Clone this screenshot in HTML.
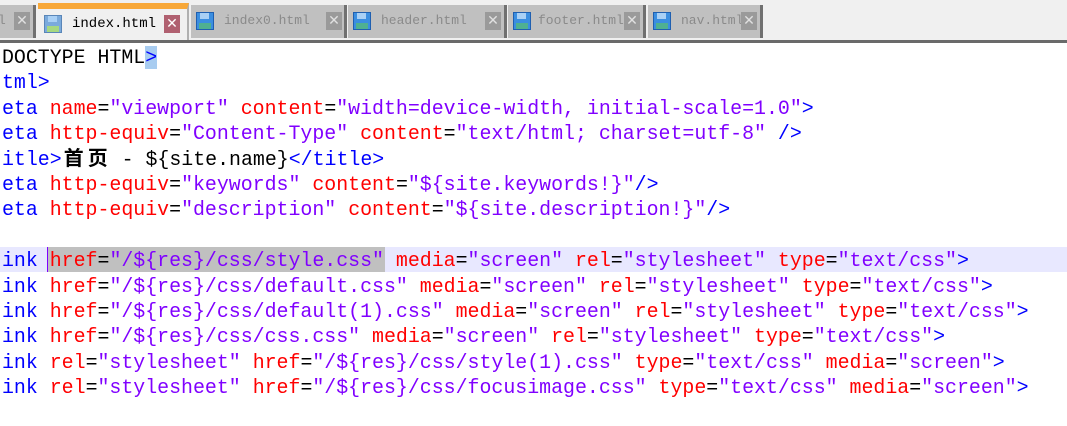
<!DOCTYPE html>
<html><head><meta charset="utf-8"><style>
body{margin:0;width:1067px;height:426px;overflow:hidden;background:#fff;position:relative;font-family:"Liberation Mono","Courier New",monospace}
#bar{position:absolute;left:0;top:0;width:1067px;height:40px;background:#f0f0f0}
#bar .line{position:absolute;left:0;top:40px;width:1067px;height:3px;background:#6a6a6a}
.tab{position:absolute;top:5px;height:33px;background:#c0c0c0;border-right:3px solid #707070;box-sizing:border-box}
.tab.act{top:3px;height:38px;background:#f0f0f0;border-top:6px solid #f8a838;border-right:2px solid #b0b0b0}
.tab .t{position:absolute;top:8px;font-family:"Liberation Mono","Courier New",monospace;font-size:13px;color:#8a8a8a;white-space:nowrap}
.tab.act .t{top:7px;color:#000;font-size:14px}
.ic{position:absolute;top:7px;width:18px;height:18px;background:#3b8ee0;border:1px solid #1f5fb0;box-sizing:border-box}
.ic:before{content:"";position:absolute;left:3px;top:0;width:9px;height:6px;background:#a9d0f5}
.ic:after{content:"";position:absolute;left:2px;top:10px;width:12px;height:6px;background:#4fb090}
.act .ic{top:6px;background:#7aaadc;border-color:#5a86b8}
.act .ic:after{background:#a6d880}
.x{position:absolute;top:7px;width:16px;height:18px;background:#9a9a9a;color:#e0e0e0;font:bold 14px/18px "DejaVu Sans",sans-serif;text-align:center}
.act .x{top:6px;background:#b06070;color:#fff}
pre{position:absolute;left:2px;top:45px;margin:0;font-family:"Liberation Mono","Courier New",monospace;font-size:19.9px;line-height:25.4px;color:#000}
.hl{position:absolute;left:0;top:247px;width:1067px;height:25px;background:#e8e8ff}
.sel{position:absolute;left:47px;top:247px;width:338px;height:25px;background:#c0c0c0}
.sel:before{content:"";position:absolute;left:0;top:0;width:1px;height:25px;background:#8000ff}
.b{color:#0000ff}.r{color:#ff0000}.p{color:#8000ff}.k{color:#000}
.cj{font-family:"Noto Sans CJK SC",sans-serif;font-weight:bold;display:inline-block;width:24px;text-align:center;line-height:20px}
.br{background:#a8ccf0}
</style></head><body>
<div id="bar">
<div class="tab" style="left:0;width:36px"><span class="t" style="left:-2px">l</span><span class="x" style="left:14px">✕</span></div>
<div class="tab act" style="left:38px;width:151px"><span class="ic" style="left:6px"></span><span class="t" style="left:34px">index.html</span><span class="x" style="left:126px">✕</span></div>
<div class="tab" style="left:191px;width:156px"><span class="ic" style="left:5px"></span><span class="t" style="left:33px">index0.html</span><span class="x" style="left:135px">✕</span></div>
<div class="tab" style="left:348px;width:159px"><span class="ic" style="left:5px"></span><span class="t" style="left:33px">header.html</span><span class="x" style="left:137px">✕</span></div>
<div class="tab" style="left:508px;width:138px"><span class="ic" style="left:5px"></span><span class="t" style="left:30px">footer.html</span><span class="x" style="left:116px">✕</span></div>
<div class="tab" style="left:648px;width:115px"><span class="ic" style="left:5px"></span><span class="t" style="left:33px">nav.html</span><span class="x" style="left:93px">✕</span></div>
<div class="line"></div>
</div>
<div class="hl"></div><div class="sel"></div>
<pre><span class="k">DOCTYPE HTML</span><span class="b br">&gt;</span>
<span class="b">tml&gt;</span>
<span class="b">eta </span><span class="r">name</span>=<span class="p">"viewport"</span> <span class="r">content</span>=<span class="p">"width=device-width, initial-scale=1.0"</span><span class="b">&gt;</span>
<span class="b">eta </span><span class="r">http-equiv</span>=<span class="p">"Content-Type"</span> <span class="r">content</span>=<span class="p">"text/html; charset=utf-8"</span> <span class="b">/&gt;</span>
<span class="b">itle&gt;</span><span class="cj">首</span><span class="cj">页</span> - ${site.name}<span class="b">&lt;/title&gt;</span>
<span class="b">eta </span><span class="r">http-equiv</span>=<span class="p">"keywords"</span> <span class="r">content</span>=<span class="p">"${site.keywords!}"</span><span class="b">/&gt;</span>
<span class="b">eta </span><span class="r">http-equiv</span>=<span class="p">"description"</span> <span class="r">content</span>=<span class="p">"${site.description!}"</span><span class="b">/&gt;</span>

<span class="b">ink </span><span class="r">href</span>=<span class="p">"/${res}/css/style.css"</span> <span class="r">media</span>=<span class="p">"screen"</span> <span class="r">rel</span>=<span class="p">"stylesheet"</span> <span class="r">type</span>=<span class="p">"text/css"</span><span class="b">&gt;</span>
<span class="b">ink </span><span class="r">href</span>=<span class="p">"/${res}/css/default.css"</span> <span class="r">media</span>=<span class="p">"screen"</span> <span class="r">rel</span>=<span class="p">"stylesheet"</span> <span class="r">type</span>=<span class="p">"text/css"</span><span class="b">&gt;</span>
<span class="b">ink </span><span class="r">href</span>=<span class="p">"/${res}/css/default(1).css"</span> <span class="r">media</span>=<span class="p">"screen"</span> <span class="r">rel</span>=<span class="p">"stylesheet"</span> <span class="r">type</span>=<span class="p">"text/css"</span><span class="b">&gt;</span>
<span class="b">ink </span><span class="r">href</span>=<span class="p">"/${res}/css/css.css"</span> <span class="r">media</span>=<span class="p">"screen"</span> <span class="r">rel</span>=<span class="p">"stylesheet"</span> <span class="r">type</span>=<span class="p">"text/css"</span><span class="b">&gt;</span>
<span class="b">ink </span><span class="r">rel</span>=<span class="p">"stylesheet"</span> <span class="r">href</span>=<span class="p">"/${res}/css/style(1).css"</span> <span class="r">type</span>=<span class="p">"text/css"</span> <span class="r">media</span>=<span class="p">"screen"</span><span class="b">&gt;</span>
<span class="b">ink </span><span class="r">rel</span>=<span class="p">"stylesheet"</span> <span class="r">href</span>=<span class="p">"/${res}/css/focusimage.css"</span> <span class="r">type</span>=<span class="p">"text/css"</span> <span class="r">media</span>=<span class="p">"screen"</span><span class="b">&gt;</span></pre>
</body></html>
